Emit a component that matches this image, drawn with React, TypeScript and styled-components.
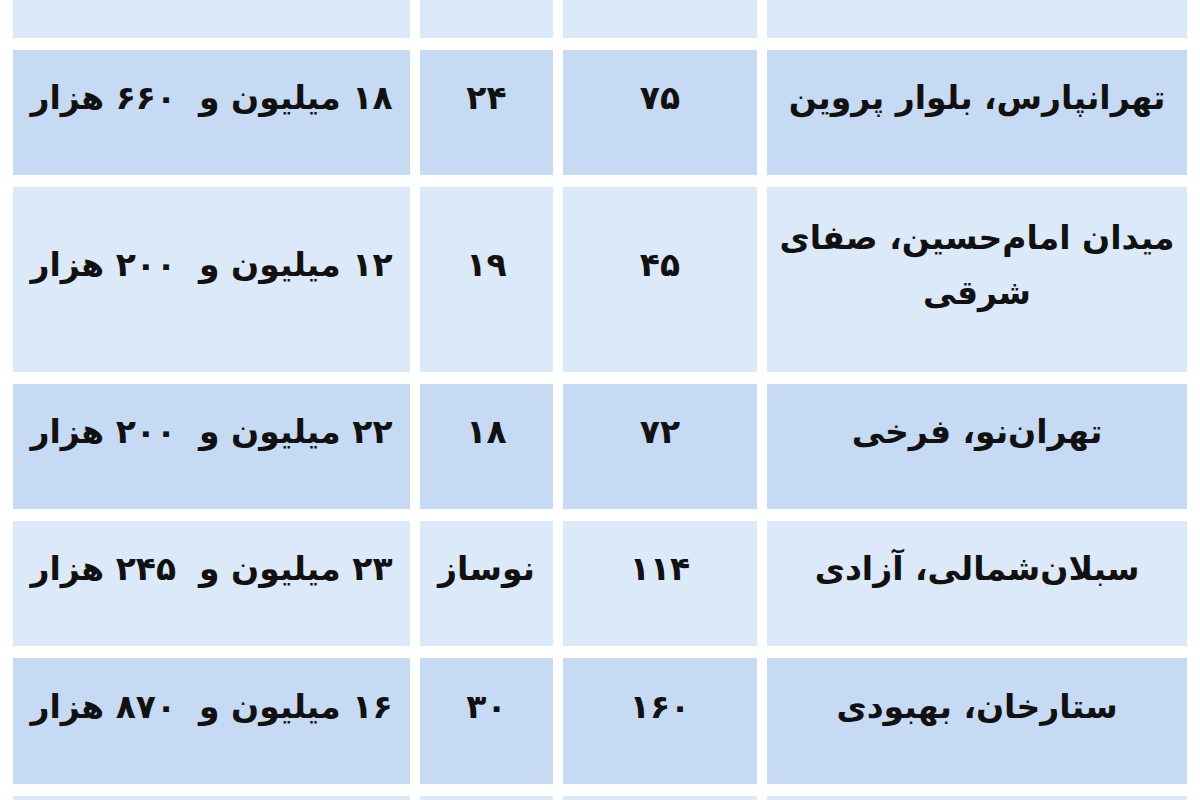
import React from 'react'
import styled, { createGlobalStyle } from 'styled-components'

const GlobalStyle = createGlobalStyle`
  html, body {
    margin: 0;
    padding: 0;
    background: #ffffff;
  }
  body {
    font-family: 'DejaVu Sans', sans-serif;
  }
`

const Viewport = styled.div`
  width: 1200px;
  height: 800px;
  overflow: hidden;
  background: #ffffff;
`

// the screenshot is scrolled part way into the table, so the first row is cut off
const Table = styled.div`
  display: grid;
  grid-template-columns: 420px 194px 133px 397px;
  grid-template-rows: 125px 125px 185px 125px 125px 126px 125px;
  column-gap: 10px;
  row-gap: 12px;
  padding: 0 13px;
  margin-top: -87px;
`

const Cell = styled.div<{ $dark?: boolean; $keepSpaces?: boolean }>`
  display: flex;
  flex-direction: column;
  align-items: center;
  justify-content: center;
  padding: 0 8px 30px;
  box-sizing: border-box;
  background: ${props => (props.$dark ? '#c6daf3' : '#dce9f8')};
  color: #111111;
  font-family: 'DejaVu Sans', sans-serif;
  font-weight: bold;
  font-size: 33px;
  line-height: 55px;
  text-align: center;
  white-space: ${props => (props.$keepSpaces ? 'pre' : 'nowrap')};
`

const Line = styled.span`
  display: block;
`

interface Row {
  place: string[]
  area: string
  age: string
  price: string
}

const rows: Row[] = [
  { place: ['تهرانپارس، بلوار پروین'], area: '۷۵', age: '۲۴', price: '۱۸ میلیون و  ۶۶۰ هزار' },
  { place: ['میدان امام‌حسین، صفای', 'شرقی'], area: '۴۵', age: '۱۹', price: '۱۲ میلیون و  ۲۰۰ هزار' },
  { place: ['تهران‌نو، فرخی'], area: '۷۲', age: '۱۸', price: '۲۲ میلیون و  ۲۰۰ هزار' },
  { place: ['سبلان‌شمالی، آزادی'], area: '۱۱۴', age: 'نوساز', price: '۲۳ میلیون و  ۲۴۵ هزار' },
  { place: ['ستارخان، بهبودی'], area: '۱۶۰', age: '۳۰', price: '۱۶ میلیون و  ۸۷۰ هزار' },
]

const EmptyRow = () => (
  <>
    <Cell />
    <Cell />
    <Cell />
    <Cell />
  </>
)

export default function App() {
  return (
    <Viewport>
      <GlobalStyle />
      <Table dir="rtl">
        <EmptyRow />
        {rows.map((row, i) => {
          const dark = i % 2 === 0
          return (
            <React.Fragment key={i}>
              <Cell $dark={dark}>
                {row.place.map(line => (
                  <Line key={line}>{line}</Line>
                ))}
              </Cell>
              <Cell $dark={dark}>{row.area}</Cell>
              <Cell $dark={dark}>{row.age}</Cell>
              <Cell $dark={dark} $keepSpaces>
                {row.price}
              </Cell>
            </React.Fragment>
          )
        })}
        <EmptyRow />
      </Table>
    </Viewport>
  )
}
